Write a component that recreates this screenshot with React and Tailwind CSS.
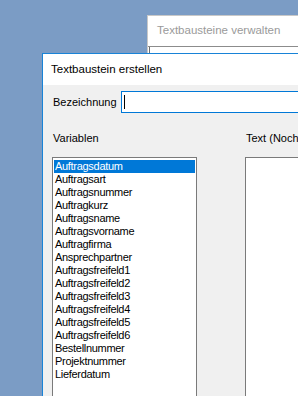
import React from 'react';

const variablen = [
  'Auftragsdatum',
  'Auftragsart',
  'Auftragsnummer',
  'Auftragkurz',
  'Auftragsname',
  'Auftragsvorname',
  'Auftragfirma',
  'Ansprechpartner',
  'Auftragsfreifeld1',
  'Auftragsfreifeld2',
  'Auftragsfreifeld3',
  'Auftragsfreifeld4',
  'Auftragsfreifeld5',
  'Auftragsfreifeld6',
  'Bestellnummer',
  'Projektnummer',
  'Lieferdatum',
];

function BackWindow() {
  return (
    <div className="absolute left-[147px] top-[15px] w-[200px] h-[60px] border-l border-t border-[#c8c8c8] bg-white">
      <div className="h-[30px] flex items-center pl-[9px] text-[11.5px] text-[#9a9a9a] whitespace-nowrap">
        Textbausteine verwalten
      </div>
      <div className="h-px bg-[#8c8c8c]" />
      <div className="h-full ml-px border-l border-[#6e6e6e] bg-white" />
    </div>
  );
}

function ListBox() {
  return (
    <div className="shrink-0 w-[145px] h-[260px] border border-[#7a7a7a] bg-white pt-[2px] px-px">
      {variablen.map((v, i) => (
        <div
          key={v}
          className={
            'h-[13px] leading-[13px] pl-px text-[11px] tracking-[-0.3px] whitespace-nowrap ' +
            (i === 0 ? 'bg-[#0078d7] text-white' : 'text-black')
          }
        >
          {v}
        </div>
      ))}
    </div>
  );
}

export default function App() {
  return (
    <div
      className="relative w-[298px] h-[396px] overflow-hidden bg-[#7b9cc5]"
      style={{ fontFamily: '"Liberation Sans", Arial, sans-serif' }}
    >
      <BackWindow />

      <div className="absolute left-[42px] top-[53px] w-[400px] h-[400px] border-l border-t border-[#1883d7] bg-[#f0f0f0]">
        <div className="h-[31px] bg-white flex items-center pl-[8px] text-[11.5px] text-black whitespace-nowrap">
          Textbaustein erstellen
        </div>

        <div className="pl-[9px] pt-[6px] text-[11px] text-black">
          <div className="flex items-center h-[22px]">
            <div className="shrink-0 w-[69px] pl-px whitespace-nowrap">Bezeichnung</div>
            <div className="flex-1 h-[22px] border border-[#0078d7] bg-white flex items-center pl-[2px]">
              <div className="w-px h-[14px] bg-black" />
            </div>
          </div>

          <div className="flex mt-[19px] h-[13px] leading-[13px] whitespace-nowrap">
            <div className="shrink-0 w-[193px] pl-px">Variablen</div>
            <div className="pl-px">Text (Noch 1000 Zeichen)</div>
          </div>

          <div className="flex mt-[12px]">
            <ListBox />
            <div className="shrink-0 ml-[48px] w-[160px] h-[260px] border border-[#7a7a7a] bg-white" />
          </div>
        </div>
      </div>
    </div>
  );
}
